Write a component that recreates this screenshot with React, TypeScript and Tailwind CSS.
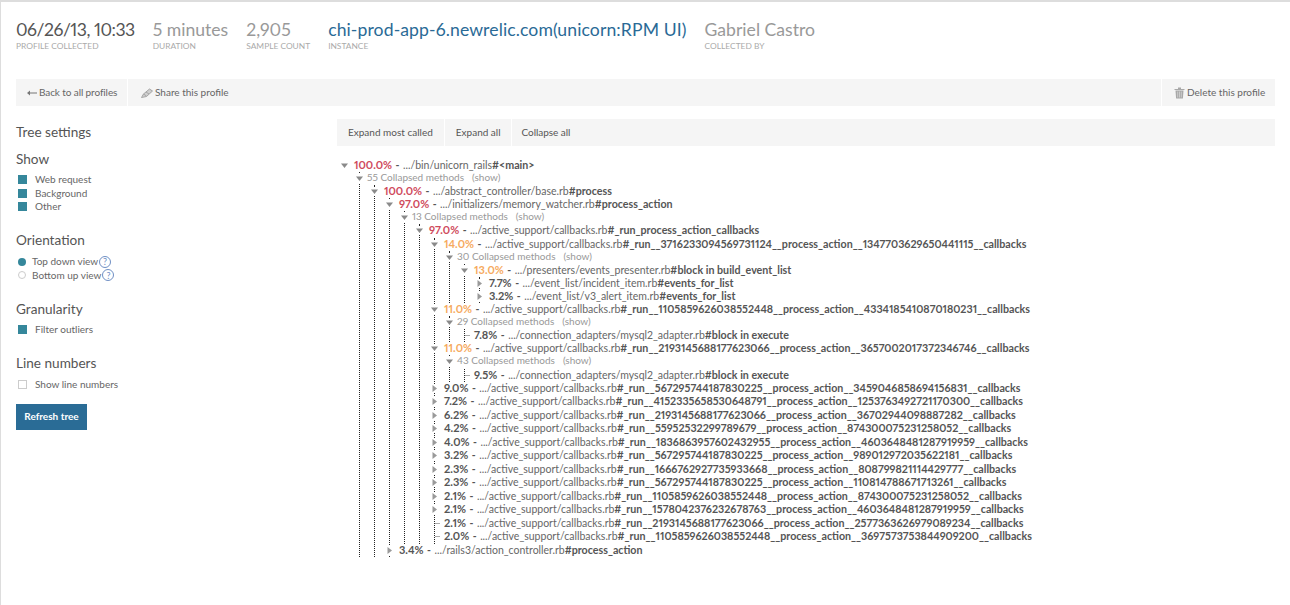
import React from "react";

type Mark = "down" | "right" | "tick";
type Node = {
  pct?: string;
  color?: string;
  path?: string;
  method?: string;
  collapsed?: string;
  mark: Mark;
  tall?: boolean;
  kids?: Node[];
};

const RED = "text-[#cf4a5c]";
const ORG = "text-[#f6aa5e]";
const cb = ".../active_support/callbacks.rb";
const run = (a: string, b: string) => `#_run__${a}__process_action__${b}__callbacks`;
const leaf = (pct: string, a: string, b: string, mark: Mark = "right"): Node => ({ pct, path: cb, method: run(a, b), mark, tall: true });

const tree: Node = {
  pct: "100.0%", color: RED, path: ".../bin/unicorn_rails", method: "#<main>", mark: "down",
  kids: [{
    collapsed: "55", mark: "down",
    kids: [{
      pct: "100.0%", color: RED, path: ".../abstract_controller/base.rb", method: "#process", mark: "down",
      kids: [
        {
          pct: "97.0%", color: RED, path: ".../initializers/memory_watcher.rb", method: "#process_action", mark: "down",
          kids: [{
            collapsed: "13", mark: "down",
            kids: [{
              pct: "97.0%", color: RED, path: cb, method: "#_run_process_action_callbacks", mark: "down",
              kids: [
                {
                  pct: "14.0%", color: ORG, path: cb, method: run("3716233094569731124", "1347703629650441115"), mark: "down",
                  kids: [{
                    collapsed: "30", mark: "down",
                    kids: [{
                      pct: "13.0%", color: ORG, path: ".../presenters/events_presenter.rb", method: "#block in build_event_list", mark: "down",
                      kids: [
                        { pct: "7.7%", path: ".../event_list/incident_item.rb", method: "#events_for_list", mark: "right" },
                        { pct: "3.2%", path: ".../event_list/v3_alert_item.rb", method: "#events_for_list", mark: "right" },
                      ],
                    }],
                  }],
                },
                {
                  pct: "11.0%", color: ORG, path: cb, method: run("1105859626038552448", "4334185410870180231"), mark: "down",
                  kids: [{
                    collapsed: "29", mark: "down",
                    kids: [{ pct: "7.8%", path: ".../connection_adapters/mysql2_adapter.rb", method: "#block in execute", mark: "tick" }],
                  }],
                },
                {
                  pct: "11.0%", color: ORG, path: cb, method: run("2193145688177623066", "3657002017372346746"), mark: "down",
                  kids: [{
                    collapsed: "43", mark: "down",
                    kids: [{ pct: "9.5%", path: ".../connection_adapters/mysql2_adapter.rb", method: "#block in execute", mark: "tick" }],
                  }],
                },
                leaf("9.0%", "567295744187830225", "3459046858694156831"),
                leaf("7.2%", "4152335658530648791", "1253763492721170300"),
                leaf("6.2%", "2193145688177623066", "36702944098887282"),
                leaf("4.2%", "55952532299789679", "874300075231258052"),
                leaf("4.0%", "1836863957602432955", "4603648481287919959"),
                leaf("3.2%", "567295744187830225", "989012972035622181"),
                leaf("2.3%", "1666762927735933668", "808799821114429777"),
                leaf("2.3%", "567295744187830225", "110814788671713261"),
                leaf("2.1%", "1105859626038552448", "874300075231258052"),
                leaf("2.1%", "1578042376232678763", "4603648481287919959"),
                leaf("2.1%", "2193145688177623066", "2577363626979089234", "tick"),
                leaf("2.0%", "1105859626038552448", "3697573753844909200", "tick"),
              ],
            }],
          }],
        },
        { pct: "3.4%", path: ".../rails3/action_controller.rb", method: "#process_action", mark: "right", tall: true },
      ],
    }],
  }],
};

function MarkIcon({ mark }: { mark: Mark }) {
  if (mark === "tick") {
    return (
      <svg width="6" height="9" viewBox="0 0 6 9" className="absolute left-0 top-[2px]">
        <path d="M0 4.5H5" stroke="#aaa" strokeWidth="1" fill="none" />
      </svg>
    );
  }
  return (
    <svg width="9" height="9" viewBox="0 0 9 9" className="absolute left-[-5px] top-[2px] bg-white">
      {mark === "down" && <path d="M1 2.5h7L4.5 7z" fill="#8a8a8a" />}
      {mark === "right" && <path d="M2.5 1v7L7 4.5z" fill="#9a9a9a" />}
    </svg>
  );
}

function Row({ n }: { n: Node }) {
  if (n.collapsed) {
    return (
      <div className="relative h-[13.1px] pl-[7px] flex items-baseline whitespace-nowrap text-[#999] text-[10px]">
        <MarkIcon mark={n.mark} />
        <span>{n.collapsed} Collapsed methods</span>
        <span className="ml-[8px]">(show)</span>
      </div>
    );
  }
  return (
    <div className={`relative ${n.tall ? "h-[13.5px]" : "h-[13.1px]"} pl-[9px] flex items-baseline whitespace-nowrap text-[#666]`}>
      <MarkIcon mark={n.mark} />
      <span className={`font-bold text-[11px] ${n.color ?? "text-[#555]"}`}>{n.pct}</span>
      <span className="font-bold text-[#555] mx-[3.5px]">-</span>
      <span>{n.path}</span>
      <span className="font-bold text-[#555] text-[10.7px]">{n.method}</span>
    </div>
  );
}

function Item({ n }: { n: Node }) {
  return (
    <li>
      <Row n={n} />
      {n.kids && <List items={n.kids} />}
    </li>
  );
}

function List({ items }: { items: Node[] }) {
  return (
    <ul className="ml-[14px] border-l border-dotted border-[#222]">
      {items.map((n, i) => (
        <Item key={i} n={n} />
      ))}
    </ul>
  );
}

function Check({ on }: { on?: boolean }) {
  return <span className={`w-[9px] h-[9px] ${on ? "bg-[#35879b]" : "border border-[#ccc] bg-white"}`} />;
}

function Opt({ label, on }: { label: string; on?: boolean }) {
  return (
    <div className="h-[13.4px] pl-[2px] flex items-center gap-[8px] text-[#666] text-[10px]">
      <Check on={on} />
      <span>{label}</span>
    </div>
  );
}

function Help() {
  return (
    <span className="ml-[1px] w-[12px] h-[12px] rounded-full border border-[#6f8fc4] text-[#6f8fc4] text-[9px] leading-none flex items-center justify-center">?</span>
  );
}

function Radio({ label, on }: { label: string; on?: boolean }) {
  return (
    <div className="h-[13.4px] pl-[2px] flex items-center text-[#666] text-[10px]">
      <span className={`w-[8px] h-[8px] rounded-full mr-[6px] ${on ? "bg-[#35879b]" : "border border-[#ccc]"}`} />
      <span>{label}</span>
      <Help />
    </div>
  );
}

function Stat({ value, label, cls }: { value: string; label: string; cls: string }) {
  return (
    <div className="flex flex-col">
      <span className={`text-[17.6px] leading-[22px] whitespace-nowrap ${cls}`}>{value}</span>
      <span className="text-[8.4px] leading-[10px] uppercase text-[#aaa] whitespace-nowrap">{label}</span>
    </div>
  );
}

function Heading({ children }: { children: React.ReactNode }) {
  return <div className="text-[13.6px] leading-[18px] text-[#555]">{children}</div>;
}

export default function App() {
  return (
    <div className="relative w-[1290px] h-[605px] overflow-hidden bg-white border-t-2 border-l border-[#dddddd] font-['Lato','Liberation_Sans',sans-serif] proportional-nums">
      <div className="absolute left-[-1px] top-[351px] w-[1px] h-[25px] bg-white" />
      <div className="pl-[15px] pr-[15px]">
        <header className="flex pt-[17px] gap-[18px] h-[77px]">
          <Stat value="06/26/13, 10:33" label="Profile collected" cls="text-[#555] tracking-[-0.5px]" />
          <Stat value="5 minutes" label="Duration" cls="text-[#999]" />
          <Stat value="2,905" label="Sample count" cls="text-[#999]" />
          <Stat value="chi-prod-app-6.newrelic.com(unicorn:RPM UI)" label="Instance" cls="text-[#2a6a96] tracking-[0.1px]" />
          <Stat value="Gabriel Castro" label="Collected by" cls="text-[#999]" />
        </header>
        <nav className="flex h-[27px] bg-[#f5f5f5] text-[10px] text-[#666] items-stretch">
          <a className="w-[112px] border-r border-white flex items-center pl-[11px] gap-[2px]">
            <svg width="10" height="8" viewBox="0 0 10 8"><path d="M0 4l3-2.5v2h7v1H3v2z" fill="#777" /></svg>
            <span className="tracking-[-0.1px]">Back to all profiles</span>
          </a>
          <a className="flex items-center pl-[13px] gap-[2px]">
            <svg width="12" height="10" viewBox="0 0 12 10" fill="#d0d0d0" stroke="#a5a5a5"><path d="M0.5 9.5l2-3.5 6-5 3 2-6 5.5z" /><path d="M2.5 6l3 2M5 4l3 2" /></svg>
            <span>Share this profile</span>
          </a>
          <a className="ml-auto w-[114px] border-l border-white flex items-center pl-[12px] gap-[2px]">
            <svg width="11" height="12" viewBox="0 0 11 12"><path d="M0.5 2h10v1h-10zM4 0.5h3V2H4zM1.5 3.5h8l-.6 8H2.1z" fill="#a8a8a8" /><path d="M3.7 4.5v6M5.5 4.5v6M7.3 4.5v6" stroke="#e4e4e4" strokeWidth="0.6" /></svg>
            <span>Delete this profile</span>
          </a>
        </nav>
        <div className="flex mt-[13px]">
          <aside className="w-[321px] shrink-0">
            <div className="h-[26px] flex items-center"><Heading>Tree settings</Heading></div>
            <div className="mt-[5px]"><Heading>Show</Heading></div>
            <div className="mt-[5px]">
              <Opt label="Web request" on />
              <Opt label="Background" on />
              <Opt label="Other" on />
            </div>
            <div className="mt-[18px]"><Heading>Orientation</Heading></div>
            <div className="mt-[6px]">
              <Radio label="Top down view" on />
              <Radio label="Bottom up view" />
            </div>
            <div className="mt-[18px]"><Heading>Granularity</Heading></div>
            <div className="mt-[5px]"><Opt label="Filter outliers" on /></div>
            <div className="mt-[18px]"><Heading>Line numbers</Heading></div>
            <div className="mt-[5px]"><Opt label="Show line numbers" /></div>
            <button className="mt-[13px] w-[71px] h-[26px] bg-[#2a6c96] text-white text-[10px] font-bold">Refresh tree</button>
          </aside>
          <main className="flex-1">
            <div className="flex h-[27px] bg-[#f5f5f5] text-[10px] text-[#555] items-stretch">
              <span className="px-[11px] flex items-center border-r border-white">Expand most called</span>
              <span className="pl-[11px] pr-[10px] flex items-center border-r border-white">Expand all</span>
              <span className="pl-[10px] flex items-center tracking-[-0.05px]">Collapse all</span>
            </div>
            <ul className="mt-[13px] ml-[8px] text-[10.5px] leading-[11px]">
              <Item n={tree} />
            </ul>
          </main>
        </div>
      </div>
    </div>
  );
}
